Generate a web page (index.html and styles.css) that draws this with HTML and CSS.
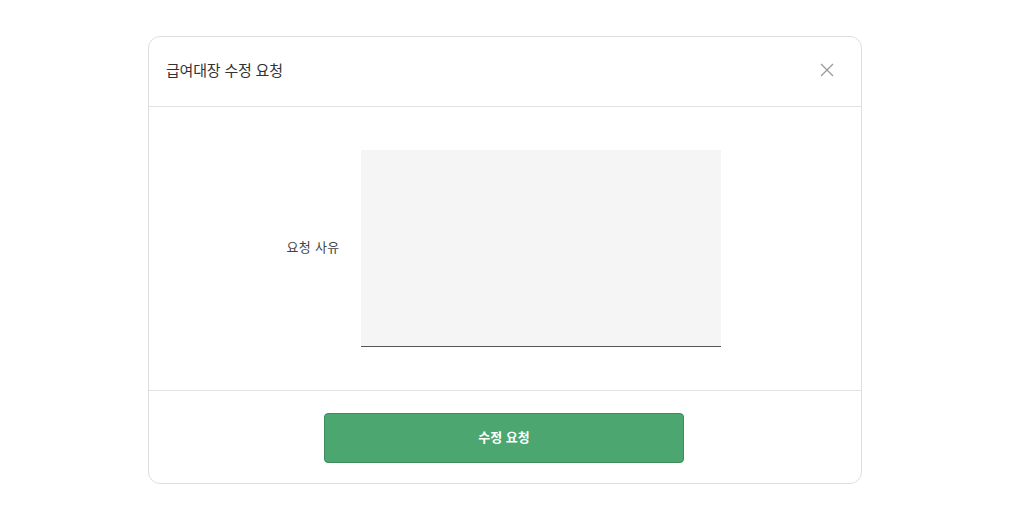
FILE: index.html
```html
<!DOCTYPE html>
<html lang="ko">
<head>
<meta charset="utf-8">
<link rel="stylesheet" href="styles.css">
</head>
<body>
<div class="page">
  <div class="modal">
    <div class="modal-header">
      <h2 class="modal-title">급여대장 수정 요청</h2>
      <button class="close" aria-label="닫기">
        <svg width="14" height="14" viewBox="0 0 14 14"><path d="M1 1L13 13M13 1L1 13" stroke="#9a9a9a" stroke-width="1.3" fill="none"/></svg>
      </button>
    </div>
    <div class="modal-body">
      <label class="field-label" for="reason">요청 사유</label>
      <textarea id="reason" class="field-input"></textarea>
    </div>
    <div class="modal-footer">
      <button class="submit">수정 요청</button>
    </div>
  </div>
</div>
</body>
</html>
```
FILE: styles.css
```css
* { box-sizing: border-box; }
html, body { margin: 0; padding: 0; background: #fff; }
body { font-family: "Noto Sans CJK KR", "Noto Sans", sans-serif; color: #333; }
.page { padding-top: 36px; padding-left: 148px; }
.modal {
  width: 714px;
  border: 1px solid #dedede;
  border-radius: 12px;
  background: #fff;
}
.modal-header {
  height: 70px;
  border-bottom: 1px solid #e2e2e2;
  display: flex;
  align-items: center;
  justify-content: space-between;
  padding: 0 27px 4px 17px;
}
.modal-title { margin: 0; font-size: 15px; font-weight: 400; color: #333; letter-spacing: -0.2px; }
.close { background: none; border: 0; padding: 0; display: flex; cursor: pointer; }
.modal-body {
  display: flex;
  justify-content: center;
  align-items: center;
  gap: 22px;
  padding: 43px 2px 43px 0;
  border-bottom: 1px solid #e2e2e2;
}
.field-label { font-size: 13px; color: #444; padding-bottom: 4px; letter-spacing: 0.3px; }
.field-input {
  width: 360px;
  height: 197px;
  background: #f5f5f5;
  border: 0;
  border-bottom: 1px solid #555;
  border-radius: 0;
  resize: none;
  margin: 0;
  display: block;
}
.modal-footer { display: flex; justify-content: center; padding: 22px 2px 20px 0; }
.submit {
  width: 360px;
  height: 50px;
  background: #4ca66f;
  border: 1px solid #3e8c5c;
  border-radius: 4px;
  color: #fff;
  font-family: inherit;
  font-size: 13px;
  font-weight: 700;
  padding: 0 0 3px;
}
```
